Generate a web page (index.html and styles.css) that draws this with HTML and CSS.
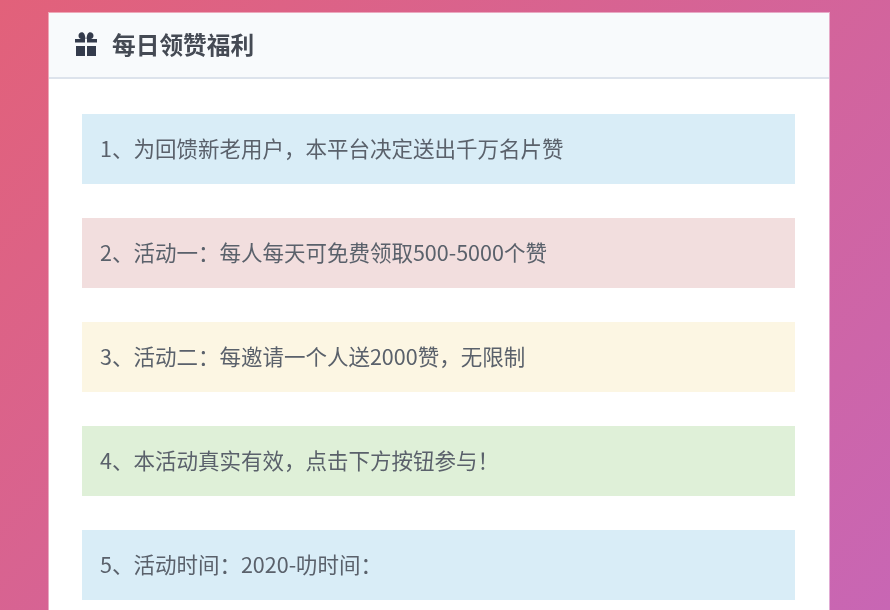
FILE: index.html
```html
<!DOCTYPE html>
<html lang="zh">
<head>
<meta charset="utf-8">
<title>每日领赞福利</title>
<link rel="stylesheet" href="styles.css">
</head>
<body>
<main class="card">
  <header class="card-head">
    <svg class="gift" viewBox="0 0 22 24" width="22" height="24" aria-hidden="true">
      <path d="M0 7h10v3.500H0zM12 7h10v3.500H12zM1 14h9v10H1zM12 14h9v10H12z"/>
      <path d="M10.500 7H6.500C4.600 7 3.500 5.500 3.500 3.800 3.500 1.800 5 .3 6.800 .3 9 .3 10.200 3 10.500 7ZM11.500 7h4c1.900 0 3-1.500 3-3.200 0-2-1.500-3.500-3.300-3.500-2.200 0-3.400 2.700-3.700 6.700Z"/>
    </svg>
    <h1 class="title">每日领赞福利</h1>
  </header>
  <div class="card-body">
    <p class="alert info"><span class="alert-text">1、为回馈新老用户，本平台决定送出千万名片赞</span></p>
    <p class="alert danger"><span class="alert-text">2、活动一：每人每天可免费领取500-5000个赞</span></p>
    <p class="alert warning"><span class="alert-text">3、活动二：每邀请一个人送2000赞，无限制</span></p>
    <p class="alert success"><span class="alert-text">4、本活动真实有效，点击下方按钮参与！</span></p>
    <p class="alert info"><span class="alert-text">5、活动时间：2020-叻时间：</span></p>
  </div>
</main>
</body>
</html>
```
FILE: styles.css
```css
* { box-sizing: border-box; }
html, body { height: 100%; }
body {
  margin: 0;
  height: 610px;
  overflow: hidden;
  padding: 12px 60px 0 48px;
  background: linear-gradient(135deg, #e2617a 0%, #c866b4 100%);
  font-family: "Microsoft YaHei", "Noto Sans CJK SC", "Liberation Sans", sans-serif;
}
.card {
  background: #fff;
  background-clip: padding-box;
  border: 1px solid rgba(255, 255, 255, 0.45);
  border-bottom: 0;
  height: 640px;
}
.card-head {
  height: 66px;
  display: flex;
  align-items: center;
  gap: 15px;
  padding: 0 0 2px 26px;
  background: #f8fafc;
  border-bottom: 2px solid #dde3ec;
}
.gift {
  fill: #343b4c;
  flex: none;
  filter: blur(0.6px);
}
.title {
  margin: 2px 0 0;
  font-size: 23.7px;
  font-weight: 700;
  color: #454a54;
  line-height: 1;
  filter: blur(0.7px);
}
.card-body {
  padding: 35px 34px 0 33px;
  display: flex;
  flex-direction: column;
  gap: 34px;
}
.alert {
  margin: 0;
  height: 70px;
  flex: none;
  display: flex;
  align-items: center;
  padding: 0 18px 2px;
}
.alert-text {
  font-size: 21.5px;
  line-height: 1;
  color: #5a616b;
  filter: blur(0.7px);
}
.info { background: #d9edf7; }
.danger { background: #f2dede; }
.warning { background: #fcf6e3; }
.success { background: #dff0d8; }
```
